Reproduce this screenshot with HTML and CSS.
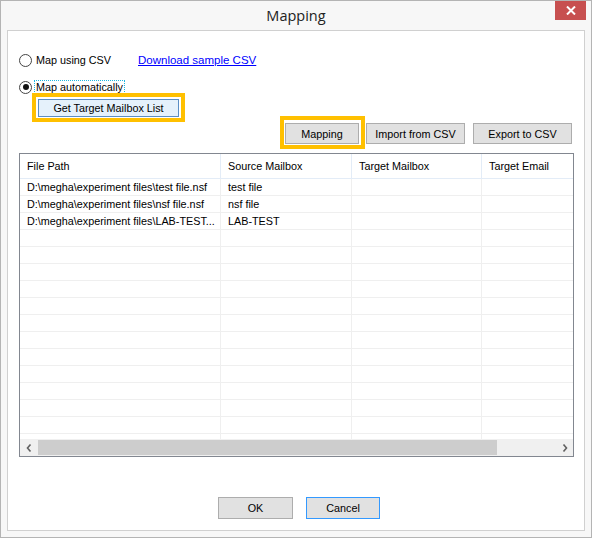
FILE: index.html
```html
<!DOCTYPE html>
<html lang="en">
<head>
    <meta charset="UTF-8">
    <title>Mapping</title>
    <link rel="stylesheet" href="styles.css">
</head>
<body>
    <div class="window">
        <!-- Title Bar -->
        <div class="titlebar">
            <span></span>
            <span class="title">Mapping</span>
            <button class="close-btn" aria-label="Close">
                <svg width="10" height="9" viewBox="0 0 10 9">
                    <path d="M1 0.5 L9 8.5 M9 0.5 L1 8.5" stroke="#fff" stroke-width="2" fill="none"/>
                </svg>
            </button>
        </div>

        <!-- Dialog Body -->
        <div class="client">
            <div class="option option-csv">
                <span class="radio"></span>
                <span class="option-label">Map using CSV</span>
                <a class="link" href="#">Download sample CSV</a>
            </div>
            <div class="option option-auto">
                <span class="radio checked"></span>
                <span class="option-label focused">Map automatically</span>
            </div>
            <div class="highlight target-box">
                <button class="btn btn-blue">Get Target Mailbox List</button>
            </div>

            <div class="actions">
                <div class="highlight mapping-box">
                    <button class="btn btn-mapping">Mapping</button>
                </div>
                <button class="btn btn-import">Import from CSV</button>
                <button class="btn btn-export">Export to CSV</button>
            </div>

            <div class="grid">
                <div class="grid-head">
                    <div class="cell">File Path</div>
                    <div class="cell">Source Mailbox</div>
                    <div class="cell">Target Mailbox</div>
                    <div class="cell">Target Email</div>
                </div>
                <div class="grid-body" id="grid-body"></div>
                <div class="hscroll">
                    <span class="arrow">
                        <svg width="6" height="8" viewBox="0 0 6 8"><path d="M4.5 0.5 L1.5 4 L4.5 7.5" stroke="#606060" stroke-width="1.6" fill="none"/></svg>
                    </span>
                    <div class="track"><div class="thumb"></div></div>
                    <span class="arrow">
                        <svg width="6" height="8" viewBox="0 0 6 8"><path d="M1.5 0.5 L4.5 4 L1.5 7.5" stroke="#606060" stroke-width="1.6" fill="none"/></svg>
                    </span>
                </div>
            </div>

            <div class="footer">
                <button class="btn btn-ok">OK</button>
                <button class="btn btn-cancel">Cancel</button>
            </div>
        </div>
    </div>

    <script>
        const gridBody = document.getElementById('grid-body');

        const rows = [
            { path: "D:\\megha\\experiment files\\test file.nsf", source: "test file" },
            { path: "D:\\megha\\experiment files\\nsf file.nsf", source: "nsf file" },
            { path: "D:\\megha\\experiment files\\LAB-TEST...", source: "LAB-TEST" }
        ];

        // Fill the list, padding with empty rows
        for (let i = 0; i < 16; i++) {
            const item = rows[i] || { path: "", source: "" };
            const row = document.createElement('div');
            row.classList.add('grid-row');
            [item.path, item.source, "", ""].forEach(text => {
                const cell = document.createElement('div');
                cell.classList.add('cell');
                cell.textContent = text;
                row.appendChild(cell);
            });
            gridBody.appendChild(row);
        }
    </script>
</body>
</html>
```

FILE: styles.css
```css
/* General Styling */
* {
    box-sizing: border-box;
}
body {
    margin: 0;
    font-family: "Liberation Sans", Arial, sans-serif;
    font-size: 10.8px;
    color: black;
    background-color: white;
}
.window {
    width: 592px;
    height: 538px;
    border: 1px solid #b4b4b4;
    background-color: #f7f7f7;
    display: flex;
    flex-direction: column;
}

/* Title Bar */
.titlebar {
    height: 29px;
    display: grid;
    grid-template-columns: 1fr auto 1fr;
}
.title {
    font-family: "Open Sans", "Noto Sans", sans-serif;
    font-size: 14.5px;
    color: #222;
    line-height: 29px;
}
.close-btn {
    justify-self: end;
    width: 31px;
    height: 19px;
    margin-right: 5px;
    border: none;
    padding: 0;
    background-color: #c75050;
    display: flex;
    justify-content: center;
    align-items: center;
}

/* Dialog Body */
.client {
    margin: 0 6px;
    height: 501px;
    border: 1px solid #d0d0d0;
    background-color: white;
    display: flex;
    flex-direction: column;
}
.option {
    display: flex;
    align-items: center;
    height: 12px;
    padding-left: 11px;
}
.option-csv {
    margin-top: 23px;
}
.option-auto {
    margin-top: 15px;
}
.radio {
    width: 13px;
    height: 13px;
    border: 1px solid #444;
    border-radius: 50%;
    background-color: white;
    display: flex;
    justify-content: center;
    align-items: center;
    flex-shrink: 0;
}
.radio.checked::after {
    content: "";
    width: 6px;
    height: 6px;
    border-radius: 50%;
    background-color: #111;
}
.option-label {
    margin-left: 3px;
    line-height: 12px;
    padding: 0 1px;
}
.option-label.focused {
    outline: 1px dotted #1fb6e0;
}
.link {
    margin-left: 26px;
    font-size: 11.5px;
    color: #0000ff;
    text-decoration: underline;
}

/* Highlighted Buttons */
.highlight {
    border: 4px solid #ffc000;
    display: flex;
}
.target-box {
    align-self: flex-start;
    margin-left: 24px;
    width: 153px;
    height: 29px;
    padding: 2px 2px 1px 2px;
}
.btn {
    font-family: "Liberation Sans", Arial, sans-serif;
    font-size: 10.8px;
    color: black;
    background-color: #e1e1e1;
    border: 1px solid #adadad;
    padding: 0;
    margin: 0;
}
.btn-blue {
    width: 141px;
    height: 18px;
    background-color: #e5f1fb;
    border-color: #5b8ec4;
}

/* Action Buttons */
.actions {
    margin-top: -6px;
    padding-right: 12px;
    display: flex;
    justify-content: flex-end;
    align-items: flex-start;
}
.mapping-box {
    width: 85px;
    height: 33px;
    padding: 3px 2px 1px 1px;
}
.btn-mapping {
    width: 74px;
    height: 21px;
}
.btn-import, .btn-export {
    width: 99px;
    height: 21px;
    margin-top: 7px;
}
.btn-import {
    margin-left: 1px;
}
.btn-export {
    margin-left: 8px;
}

/* List Grid */
.grid {
    margin: 4px 10px 0 11px;
    height: 304px;
    border: 1px solid #828790;
    display: flex;
    flex-direction: column;
    overflow: hidden;
}
.grid-head, .grid-row {
    display: grid;
    grid-template-columns: 201px 131px 130px 1fr;
}
.grid-head .cell {
    height: 25px;
    line-height: 24px;
    border-right: 1px solid #e3ecf7;
    border-bottom: 1px solid #e3ecf7;
}
.grid-body {
    height: 260px;
    overflow: hidden;
}
.grid-row .cell {
    height: 17px;
    line-height: 16px;
    border-right: 1px solid #efefef;
    border-bottom: 1px solid #efefef;
}
.cell {
    padding-left: 7px;
    white-space: nowrap;
    overflow: hidden;
}
.grid-head .cell:last-child, .grid-row .cell:last-child {
    border-right: none;
}
.hscroll {
    height: 17px;
    background-color: #f0f0f0;
    display: flex;
    align-items: center;
}
.arrow {
    width: 17px;
    height: 17px;
    display: flex;
    justify-content: center;
    align-items: center;
}
.track {
    flex: 1;
    height: 15px;
}
.thumb {
    margin-left: 1px;
    width: 459px;
    height: 15px;
    background-color: #cdcdcd;
}

/* Footer */
.footer {
    margin-top: 40px;
    padding-left: 210px;
    display: flex;
    gap: 13px;
}
.btn-ok, .btn-cancel {
    width: 75px;
    height: 22px;
}
.btn-cancel {
    width: 74px;
    border-color: #3399ff;
}
```
